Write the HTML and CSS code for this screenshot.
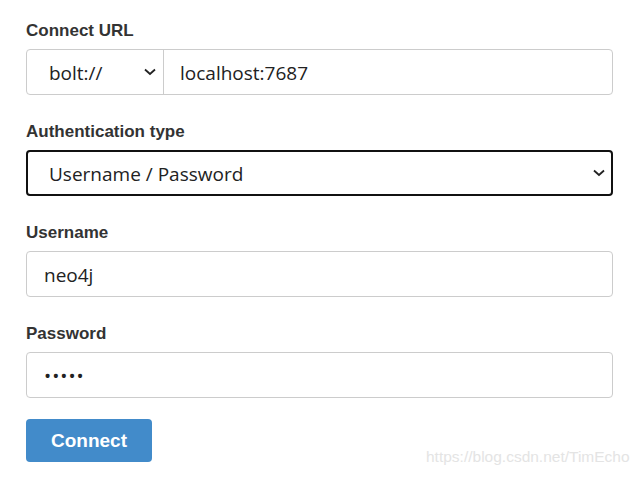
FILE: index.html
```html
<!DOCTYPE html>
<html lang="en">
<head>
<meta charset="utf-8">
<title>Connect</title>
<link rel="stylesheet" href="styles.css">
</head>
<body>
<div class="page">
  <form class="form">
    <div class="group">
      <div class="label">Connect URL</div>
      <div class="url-row">
        <div class="scheme">
          <span class="value">bolt://</span>
          <svg class="chevron" width="12" height="8" viewBox="0 0 12 8"><path d="M1 1.5 L6 6 L11 1.5" fill="none" stroke="#222" stroke-width="1.8"/></svg>
        </div>
        <div class="url-host">localhost:7687</div>
      </div>
    </div>
    <div class="group">
      <div class="label">Authentication type</div>
      <div class="select focused">
        <span class="value">Username / Password</span>
        <svg class="chevron" width="12" height="8" viewBox="0 0 12 8"><path d="M1 1.5 L6 6 L11 1.5" fill="none" stroke="#222" stroke-width="1.8"/></svg>
      </div>
    </div>
    <div class="group">
      <div class="label">Username</div>
      <div class="input">neo4j</div>
    </div>
    <div class="group last">
      <div class="label">Password</div>
      <div class="input password">•••••</div>
    </div>
    <div class="button">Connect</div>
  </form>
  <div class="watermark">https://blog.csdn.net/TimEcho</div>
</div>
</body>
</html>
```

FILE: styles.css
```css
html, body {
  margin: 0;
  padding: 0;
  background: #ffffff;
}

.page {
  position: relative;
  width: 644px;
  height: 477px;
  box-sizing: border-box;
  padding: 21px 31px 0 26px;
}

.form {
  display: flex;
  flex-direction: column;
  align-items: stretch;
}

.group {
  margin-bottom: 27px;
}

.group.last {
  margin-bottom: 21px;
}

.label {
  font-family: "Liberation Sans", Arial, sans-serif;
  font-weight: bold;
  font-size: 17px;
  line-height: 20px;
  color: #333333;
  margin-bottom: 8px;
}

.url-row {
  display: flex;
  height: 46px;
  box-sizing: border-box;
  border: 1px solid #cccccc;
  border-radius: 4px;
  font-family: "Open Sans", "Noto Sans", sans-serif;
  font-size: 19px;
  color: #222222;
}

.scheme {
  width: 137px;
  box-sizing: border-box;
  border-right: 1px solid #cccccc;
  display: flex;
  align-items: center;
  justify-content: space-between;
  padding: 2px 7px 0 22px;
}

.url-host {
  flex: 1;
  display: flex;
  align-items: center;
  padding: 2px 0 0 16px;
}

.select {
  height: 46px;
  box-sizing: border-box;
  border: 2px solid #111111;
  border-radius: 4px;
  display: flex;
  align-items: center;
  justify-content: space-between;
  padding: 2px 6px 0 21px;
  font-family: "Open Sans", "Noto Sans", sans-serif;
  font-size: 19px;
  color: #222222;
}

.chevron {
  display: block;
  margin-top: -2px;
}

.input {
  height: 46px;
  box-sizing: border-box;
  border: 1px solid #cccccc;
  border-radius: 4px;
  display: flex;
  align-items: center;
  padding: 2px 0 0 17px;
  font-family: "Open Sans", "Noto Sans", sans-serif;
  font-size: 19px;
  color: #222222;
}

.input.password {
  letter-spacing: 1px;
}

.button {
  width: 126px;
  height: 43px;
  box-sizing: border-box;
  background: #428bca;
  border-radius: 4px;
  display: flex;
  align-items: center;
  justify-content: center;
  font-family: "Liberation Sans", Arial, sans-serif;
  font-weight: bold;
  font-size: 19px;
  color: #ffffff;
}

.watermark {
  position: absolute;
  left: 426px;
  top: 447px;
  font-family: "Liberation Sans", Arial, sans-serif;
  font-size: 15.5px;
  line-height: 20px;
  color: #e4e4e4;
  white-space: nowrap;
}
```
